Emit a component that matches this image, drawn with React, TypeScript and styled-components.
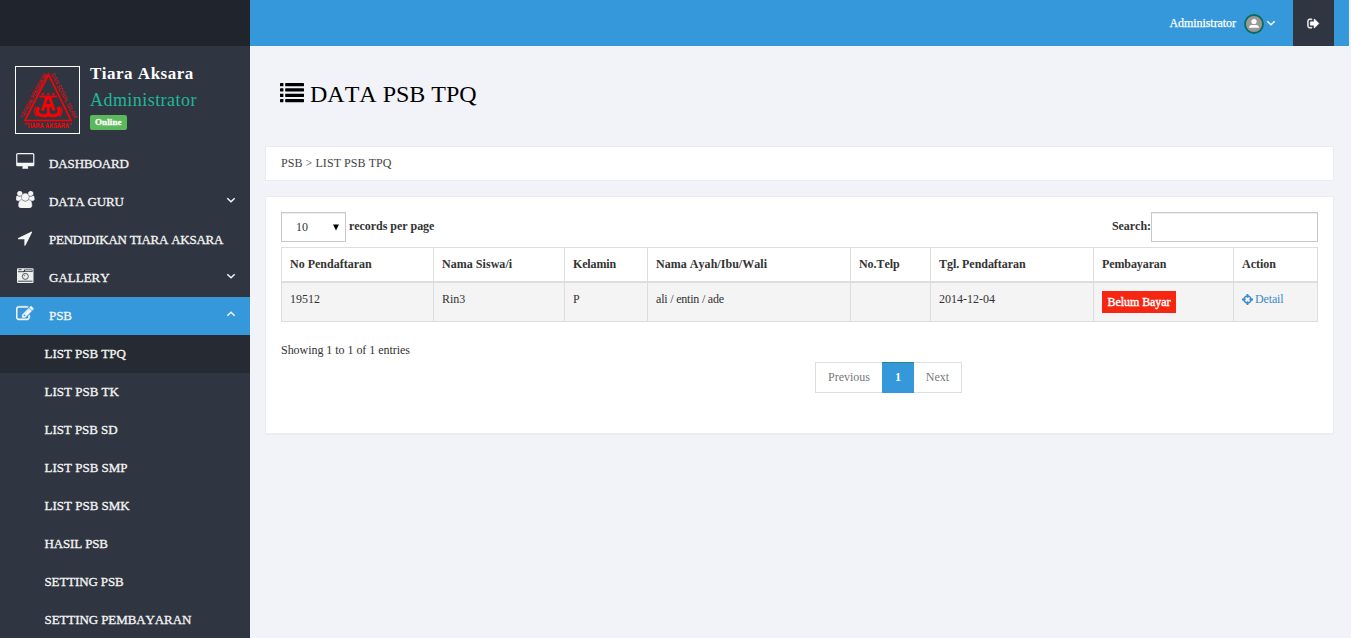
import React from "react";
import styled, { createGlobalStyle } from "styled-components";

const Global = createGlobalStyle`
  * { box-sizing: border-box; }
  body {
    margin: 0;
    background: #f2f3f8;
    color: #333;
    font: 12px/20px "Liberation Serif", "Times New Roman", serif;
    font-kerning: none;
    overflow: hidden;
  }
`;

const Page = styled.div`
  display: flex;
  height: 638px;
  overflow: hidden;
`;

/* ---------- sidebar ---------- */
const Sidebar = styled.aside`
  width: 250px;
  flex: none;
  background: #303641;
  color: #f5f5f5;
`;
const Brand = styled.div`
  height: 46px;
  background: #20242c;
`;
const Profile = styled.div`
  display: flex;
  gap: 10px;
  height: 99px;
  padding: 20px 15px 0;
`;
const LogoFrame = styled.div`
  width: 65px;
  height: 68px;
  border: 1px solid #fff;
`;
const Who = styled.div`
  display: flex;
  flex-direction: column;
  align-items: flex-start;
`;
const Name = styled.div`
  font-size: 17px;
  font-weight: bold;
  line-height: 20px;
  margin-top: -2px;
  letter-spacing: 0.5px;
  color: #fff;
`;
const Role = styled.div`
  margin-top: 6px;
  font-size: 18px;
  line-height: 20px;
  letter-spacing: 0.45px;
  color: #1fb799;
`;
const Status = styled.span`
  margin-top: 5px;
  padding: 0 5px;
  width: 37px;
  height: 15px;
  border-radius: 2px;
  background: #5cb85c;
  color: #fff;
  font-size: 9px;
  font-weight: bold;
  line-height: 14px;
  letter-spacing: 0.1px;
  -webkit-text-stroke: 0.3px currentColor;
`;
const Item = styled.a<{ $active?: boolean }>`
  display: flex;
  align-items: center;
  height: 38px;
  padding: 0 14px 0 16px;
  background: ${(p) => (p.$active ? "#3598db" : "transparent")};
`;
const ItemIcon = styled.span`
  display: flex;
  width: 33px;
  height: 22px;
`;
const Label = styled.span<{ $ls?: number }>`
  flex: 1;
  padding-bottom: 1px;
  white-space: nowrap;
  font-size: 13px;
  line-height: 20px;
  letter-spacing: ${(p) => p.$ls ?? 0}px;
  -webkit-text-stroke: 0.3px currentColor;
`;
const Arrow = styled.span`
  display: flex;
  margin-top: -4px;
`;
const SubItem = styled.a<{ $active?: boolean }>`
  display: flex;
  align-items: center;
  height: 38px;
  padding-left: 44.5px;
  background: ${(p) => (p.$active ? "#262a32" : "transparent")};
`;

/* ---------- main column ---------- */
const Main = styled.main`
  flex: 1;
  min-width: 0;
  display: flex;
  flex-direction: column;
`;
const TopBar = styled.header`
  display: flex;
  justify-content: flex-end;
  height: 46px;
  margin-right: 2px;
  padding-right: 15px;
  background: #3598db;
  color: #fff;
`;
const Account = styled.div`
  display: flex;
  align-items: center;
  gap: 2px;
  padding-right: 17px;
`;
const AccountName = styled.span`
  margin-right: 6px;
  letter-spacing: -0.06px;
  -webkit-text-stroke: 0.25px currentColor;
`;
const AvatarSlot = styled.span`
  display: flex;
  padding-top: 2px;
`;
const Logout = styled.div`
  display: flex;
  align-items: center;
  justify-content: center;
  width: 41px;
  background: #303641;
`;
const Content = styled.div`
  padding: 0 17px 0 15px;
`;
const Title = styled.h1`
  display: flex;
  align-items: center;
  gap: 6px;
  height: 100px;
  margin: 0;
  padding: 0 0 4px 15px;
  color: #000;
  font-size: 24px;
  font-weight: normal;
  line-height: 30px;
`;
const Card = styled.section`
  border: 1px solid #ebecee;
  background: #fff;
`;
const Crumbs = styled(Card)`
  height: 35px;
  padding: 6px 15px;
  color: #444;
  letter-spacing: 0.06px;
`;
const Panel = styled(Card)`
  height: 239px;
  margin-top: 15px;
  padding: 15px;
  border-bottom-width: 2px;
`;
const Controls = styled.div`
  display: flex;
  justify-content: space-between;
  height: 35px;
  font-weight: bold;
`;
const Control = styled.label`
  display: flex;
  height: 30px;
  line-height: 28px;
  letter-spacing: -0.04px;
`;
const Select = styled.span`
  display: flex;
  justify-content: space-between;
  align-items: center;
  width: 65px;
  margin-right: 3px;
  padding: 0 5px 0 14px;
  border: 1px solid #c8c8c8;
  box-shadow: inset 0 1px 1px rgba(0, 0, 0, 0.075);
  font-weight: normal;
`;
const SearchInput = styled.input`
  width: 167px;
  height: 30px;
  padding: 5px;
  border: 1px solid #c8c8c8;
  box-shadow: inset 0 1px 1px rgba(0, 0, 0, 0.075);
  outline: none;
`;
const Table = styled.table`
  width: 1037px;
  table-layout: fixed;
  border-collapse: separate;
  border-spacing: 0;
  border: solid #ddd;
  border-width: 1px 0 0 1px;
`;
const Th = styled.th<{ $ls: number }>`
  height: 35px;
  padding: 0 8px 1px;
  border: solid #ddd;
  border-width: 0 1px 2px 0;
  text-align: left;
  letter-spacing: ${(p) => p.$ls}px;
`;
const Td = styled.td<{ $ls?: number }>`
  height: 39px;
  padding: 6px 8px 0;
  vertical-align: top;
  border: solid #ddd;
  border-width: 0 1px 1px 0;
  background: #f4f4f4;
  letter-spacing: ${(p) => p.$ls ?? 0}px;
`;
const Unpaid = styled.span`
  display: block;
  width: 74px;
  height: 22px;
  margin-top: 2px;
  background: #f52612;
  color: #fff;
  line-height: 22px;
  text-align: center;
  letter-spacing: -0.08px;
  -webkit-text-stroke: 0.4px currentColor;
`;
const DetailLink = styled.a`
  display: flex;
  align-items: center;
  gap: 2px;
  color: #3b8bca;
`;
const Info = styled.div`
  margin-top: 18px;
  letter-spacing: -0.04px;
`;
const Pager = styled.div`
  display: flex;
  width: 147px;
  margin: 2px 0 0 534px;
  height: 31px;
  text-align: center;
  line-height: 28px;
  color: #777;
`;
const PageButton = styled.a<{ $w: number; $current?: boolean }>`
  width: ${(p) => p.$w}px;
  border: 1px solid #ddd;
  ${(p) =>
    p.$current
      ? "background:#3598db;color:#fff;font-weight:bold;border-color:#1d8f75 #3598db #3598db;"
      : "&:first-child{border-right:0} &:last-child{border-left:0}"}
`;

/* ---------- icons ---------- */
const Glyph = ({ d, w, h, box, bold = 0 }: { d: string; w: number; h: number; box: string; bold?: number }) => (
  <svg width={w} height={h} viewBox={box} fill="currentColor" stroke="currentColor" strokeWidth={bold}>
    <path fillRule="evenodd" d={d} />
  </svg>
);
const DESKTOP =
  "M1728 992v-832q0-13-9.5-22.5t-22.5-9.5h-1600q-13 0-22.5 9.5t-9.5 22.5v832q0 13 9.5 22.5t22.5 9.5h1600q13 0 22.5-9.5t9.5-22.5zm128-832v1088q0 66-47 113t-113 47h-544q0 37 16 77.5t32 71 16 43.5q0 26-19 45t-45 19h-512q-26 0-45-19t-19-45q0-14 16-44t32-70 16-78h-544q-66 0-113-47t-47-113v-1088q0-66 47-113t113-47h1600q66 0 113 47t47 113z";
const USERS =
  "M593 896q-162 5-265 128h-134q-82 0-138-40.5t-56-118.5q0-353 124-353 6 0 43.5 21t97.5 42.5 119 21.5q67 0 133-23-5 37-5 66 0 139 81 256zm1071 637q0 120-73 189.5t-194 69.5h-874q-121 0-194-69.5t-73-189.5q0-53 3.5-103.5t14-109 26.5-108.5 43-97.5 62-81 85.5-53.5 111.5-20q10 0 43 21.5t73 48 107 48 135 21.5 135-21.5 107-48 73-48 43-21.5q61 0 111.5 20t85.5 53.5 62 81 43 97.5 26.5 108.5 14 109 3.5 103.5zm-1024-1277q0 106-75 181t-181 75-181-75-75-181 75-181 181-75 181 75 75 181zm704 384q0 159-112.5 271.5t-271.5 112.5-271.5-112.5-112.5-271.5 112.5-271.5 271.5-112.5 271.5 112.5 112.5 271.5zm576 225q0 78-56 118.5t-138 40.5h-134q-103-123-265-128 81-117 81-256 0-29-5-66 66 23 133 23 59 0 119-21.5t97.5-42.5 43.5-21q124 0 124 353zm-128-609q0 106-75 181t-181 75-181-75-75-181 75-181 181-75 181 75 75 181z";
const ARROW =
  "M1593 349l-640 1280q-17 35-57 35-5 0-15-2-22-5-35.5-22.5t-13.5-39.5v-576h-576q-22 0-39.5-13.5t-22.5-35.5 4-42 29-30l1280-640q13-7 29-7 27 0 45 19 15 14 18.5 34.5t-6.5 39.5z";
const EDIT =
  "M888 1184l116-116-152-152-116 116v56h96v96h56zm440-720q-16-16-33 1l-350 350q-17 17-1 33t33-1l350-350q17-17 1-33zm80 594v190q0 119-84.5 203.5t-203.5 84.5h-832q-119 0-203.5-84.5t-84.5-203.5v-832q0-119 84.5-203.5t203.5-84.5h832q63 0 117 25 15 7 18 23 3 17-9 29l-49 49q-14 14-32 8-23-6-45-6h-832q-66 0-113 47t-47 113v832q0 66 47 113t113 47h832q66 0 113-47t47-113v-126q0-13 9-22l64-64q15-15 35-7t20 29zm-96-738l288 288-672 672h-288v-288zm444 132l-92 92-288-288 92-92q28-28 68-28t68 28l152 152q28 28 28 68t-28 68z";
const SIGN_OUT =
  "M704 1440q0 4 1 20t.5 26.5-3 23.5-10 19.5-20.5 6.5h-320q-119 0-203.5-84.5t-84.5-203.5v-704q0-119 84.5-203.5t203.5-84.5h320q13 0 22.5 9.5t9.5 22.5q0 4 1 20t.5 26.5-3 23.5-10 19.5-20.5 6.5h-320q-66 0-113 47t-47 113v704q0 66 47 113t113 47h312l11.5 1 11.5 3 8 5.5 7 9 2 13.5zm928-544q0 26-19 45l-544 544q-19 19-45 19t-45-19-19-45v-288h-448q-26 0-45-19t-19-45v-384q0-26 19-45t45-19h448v-288q0-26 19-45t45-19 45 19l544 544q19 19 19 45z";

const Chevron = ({ up }: { up?: boolean }) => (
  <svg width="10" height="8" viewBox="0 0 10 8" fill="none" stroke="currentColor" strokeWidth="1.5">
    <path d={up ? "M1.3 5.8L5 2.3l3.7 3.5" : "M1.3 2.2L5 5.7l3.7-3.5"} />
  </svg>
);
const Camera = () => (
  <svg width="18" height="18" viewBox="0 0 18 18">
    <rect x="1" y="1.2" width="16.5" height="14.8" rx="1" fill="#eee" />
    <path d="M2.5 2.7h3M2 4.700h6M2 14.200h14.500" stroke="#303641" strokeWidth=".9" />
    <path d="M7 5l1.400-2.400H16.500v2.400z" fill="#303641" />
    <path d="M9.300 3.300h6.500v1H8.700z" fill="#eee" />
    <circle cx="9.300" cy="9.400" r="3" fill="none" stroke="#303641" strokeWidth=".8" />
    <path d="M8 9.400a1.400 1.400 0 0 1 1.300-1.400" fill="none" stroke="#303641" strokeWidth=".6" />
  </svg>
);
const ListIcon = () => (
  <svg width="24" height="22" viewBox="0 0 24 22" fill="#000">
    {[0, 5.3, 10.7, 16].map((y) => (
      <g key={y}>
        <rect x="0" y={y} width="3.4" height="3.2" rx=".4" />
        <rect x="5.2" y={y} width="18.8" height="3.2" rx=".4" />
      </g>
    ))}
  </svg>
);
const Crosshair = () => (
  <svg width="11" height="11" viewBox="0 0 10 10" fill="none" stroke="currentColor">
    <circle cx="5" cy="5" r="3.2" strokeWidth="1.4" />
    <path d="M5 0v3.300M5 6.700V10M0 5h3.300M6.700 5H10" strokeWidth="1.600" />
  </svg>
);
const Avatar = () => (
  <svg width="20" height="20" viewBox="0 0 20 20">
    <circle cx="10" cy="10" r="9" fill="#999" stroke="#0b6b5c" strokeWidth="1.8" />
    <circle cx="10" cy="7.5" r="2.6" fill="#fff" />
    <path d="M5 13.7q0-2.600 3.200-2.800h3.600q3.200.2 3.200 2.800z" fill="#fff" />
  </svg>
);
const LogoSvg = styled.svg`
  display: block;
  overflow: visible;
`;
const Logo = () => (
  <LogoSvg width="63" height="66" viewBox="0 0 63 66" fill="red" fontFamily="Liberation Sans, sans-serif">
    <path d="M32.500 7.500L9 53.500h46z" fill="none" stroke="red" strokeWidth="1.700" />
    <g stroke="red" fill="none">
      <path d="M23.500 29.500h17.500" strokeWidth="1.800" />
      <path d="M31 30l-4.500 13.500M33.500 30l4.500 13.500M28 38.500h9" strokeWidth="3" />
      <path d="M32.300 38v11" strokeWidth="2.600" />
      <path d="M22.500 40q-3.500 7 3 8.500 6 1 6.800-2 .8 3 6.800 2 6.500-1.500 3-8.500" strokeWidth="3.200" />
      <path d="M19.500 40q-2.500 6 1.500 9.500M45 40q2.500 6-1.500 9.500" strokeWidth="1.100" />
      <path d="M26 27h2M31.300 27h2M36.500 27h2" strokeWidth="1.800" />
    </g>
    <text x="8" y="61.300" fontSize="6.800" fontWeight="bold" textLength="47.500" lengthAdjust="spacingAndGlyphs">"TIARA AKSARA"</text>
    <text transform="translate(7.200 51.500) rotate(-61.500)" fontSize="6" textLength="50" lengthAdjust="spacingAndGlyphs">YAYASAN PENDIDIKAN</text>
    <text transform="translate(34.500 7.500) rotate(62.500)" fontSize="6" textLength="50" lengthAdjust="spacingAndGlyphs">DAN SOSIAL ISLAM</text>
  </LogoSvg>
);

const menu = [
  { text: "DASHBOARD", icon: <Glyph d={DESKTOP} w={18.5} h={17} box="-64 0 1920 1792" />, ls: -0.12 },
  { text: "DATA GURU", icon: <Glyph d={USERS} w={18.5} h={17} box="0 0 1920 1792" bold={40} />, ls: -0.15, arrow: "down" },
  { text: "PENDIDIKAN TIARA AKSARA", icon: <Glyph d={ARROW} w={18} h={18} box="0 0 1792 1792" />, ls: -0.25 },
  { text: "GALLERY", icon: <Camera />, ls: 0, arrow: "down" },
  { text: "PSB", icon: <Glyph d={EDIT} w={17.5} h={17.5} box="0 0 1792 1792" bold={50} />, ls: -0.1, arrow: "up", active: true },
];
const submenu: [string, number][] = [
  ["LIST PSB TPQ", -0.03],
  ["LIST PSB TK", 0],
  ["LIST PSB SD", -0.05],
  ["LIST PSB SMP", 0],
  ["LIST PSB SMK", 0],
  ["HASIL PSB", -0.15],
  ["SETTING PSB", -0.13],
  ["SETTING PEMBAYARAN", -0.09],
];
const columns: [string, number, number][] = [
  ["No Pendaftaran", 152, 0],
  ["Nama Siswa/i", 131, 0.04],
  ["Kelamin", 83, -0.15],
  ["Nama Ayah/Ibu/Wali", 203, 0.04],
  ["No.Telp", 80, -0.05],
  ["Tgl. Pendaftaran", 163, -0.05],
  ["Pembayaran", 140, -0.1],
  ["Action", 84, 0],
];

export default function App() {
  return (
    <Page>
      <Global />
      <Sidebar>
        <Brand />
        <Profile>
          <LogoFrame><Logo /></LogoFrame>
          <Who>
            <Name>Tiara Aksara</Name>
            <Role>Administrator</Role>
            <Status>Online</Status>
          </Who>
        </Profile>
        {menu.map((m) => (
          <Item key={m.text} $active={m.active}>
            <ItemIcon>{m.icon}</ItemIcon>
            <Label $ls={m.ls}>{m.text}</Label>
            {m.arrow && <Arrow><Chevron up={m.arrow === "up"} /></Arrow>}
          </Item>
        ))}
        {submenu.map(([text, ls], i) => (
          <SubItem key={text} $active={i === 0}>
            <Label $ls={ls}>{text}</Label>
          </SubItem>
        ))}
      </Sidebar>
      <Main>
        <TopBar>
          <Account>
            <AccountName>Administrator</AccountName>
            <AvatarSlot><Avatar /></AvatarSlot>
            <Chevron />
          </Account>
          <Logout><Glyph d={SIGN_OUT} w={13} h={13} box="0 0 1792 1792" bold={60} /></Logout>
        </TopBar>
        <Content>
          <Title><ListIcon />DATA PSB TPQ</Title>
          <Crumbs>PSB &gt; LIST PSB TPQ</Crumbs>
          <Panel>
            <Controls>
              <Control>
                <Select>
                  10
                  <svg width="8" height="7" viewBox="0 0 8 7"><path d="M1 .5h6L4 6.500z" /></svg>
                </Select>
                records per page
              </Control>
              <Control>Search:<SearchInput /></Control>
            </Controls>
            <Table>
              <colgroup>{columns.map(([n, w]) => <col key={n} width={w} />)}</colgroup>
              <thead><tr>{columns.map(([n, , ls]) => <Th key={n} $ls={ls}>{n}</Th>)}</tr></thead>
              <tbody>
                <tr>
                  <Td>19512</Td>
                  <Td>Rin3</Td>
                  <Td>P</Td>
                  <Td $ls={-0.2}>ali / entin / ade</Td>
                  <Td />
                  <Td>2014-12-04</Td>
                  <Td><Unpaid>Belum Bayar</Unpaid></Td>
                  <Td $ls={-0.15}><DetailLink><Crosshair />Detail</DetailLink></Td>
                </tr>
              </tbody>
            </Table>
            <Info>Showing 1 to 1 of 1 entries</Info>
            <Pager>
              <PageButton $w={67}>Previous</PageButton>
              <PageButton $w={32} $current>1</PageButton>
              <PageButton $w={48}>Next</PageButton>
            </Pager>
          </Panel>
        </Content>
      </Main>
    </Page>
  );
}
